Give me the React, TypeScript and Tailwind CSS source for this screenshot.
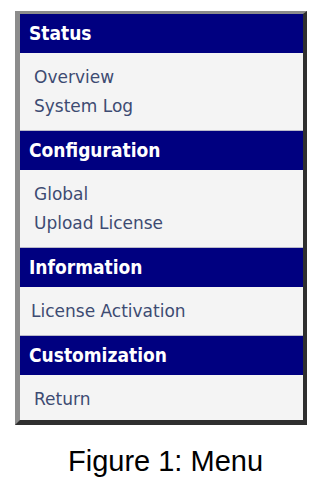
const SECTIONS = [
  { title: "Status", items: ["Overview", "System Log"] },
  { title: "Configuration", items: ["Global", "Upload License"] },
  { title: "Information", items: ["License Activation"] },
  { title: "Customization", items: ["Return"] },
];

export default function App() {
  return (
    <div className="w-[322px] h-[482px] bg-white overflow-hidden">
      {/* Menu frame */}
      <div className="ml-[15px] mt-[11px] w-[292px] border-l-[5px] border-t-[3px] border-r-[4px] border-b-[5px] border-l-[#8c8c8c] border-t-[#8c8c8c] border-r-[#2f2f2f] border-b-[#2f2f2f]">
        {SECTIONS.map((section, i) => (
          <div key={section.title} className={i > 0 ? "border-t border-[#b9b9c9]" : ""}>
            <div
              className="h-[39px] flex items-center pl-[9px] bg-[#000080] text-white font-bold text-[19px]"
              style={{ fontFamily: '"DejaVu Sans Condensed", "DejaVu Sans", sans-serif' }}
            >
              {section.title}
            </div>
            <div
              className={`bg-[#f4f4f4] pt-[10px] ${i === SECTIONS.length - 1 ? "pb-[6px]" : "pb-[9px]"}`}
            >
              {section.items.map((item) => (
                <div
                  key={item}
                  className={`${item === "License Activation" ? "pl-[11px]" : "pl-[14px]"} leading-[29px] text-[17px] text-[#3d4b72]`}
                  style={{ fontFamily: '"DejaVu Sans", sans-serif' }}
                >
                  {item}
                </div>
              ))}
            </div>
          </div>
        ))}
      </div>

      {/* Caption */}
      <div
        className="mt-[22px] pl-[9px] text-center text-[29px] leading-[28px] text-black"
        style={{ fontFamily: '"Liberation Sans", Arial, sans-serif' }}
      >
        Figure 1: Menu
      </div>
    </div>
  );
}
